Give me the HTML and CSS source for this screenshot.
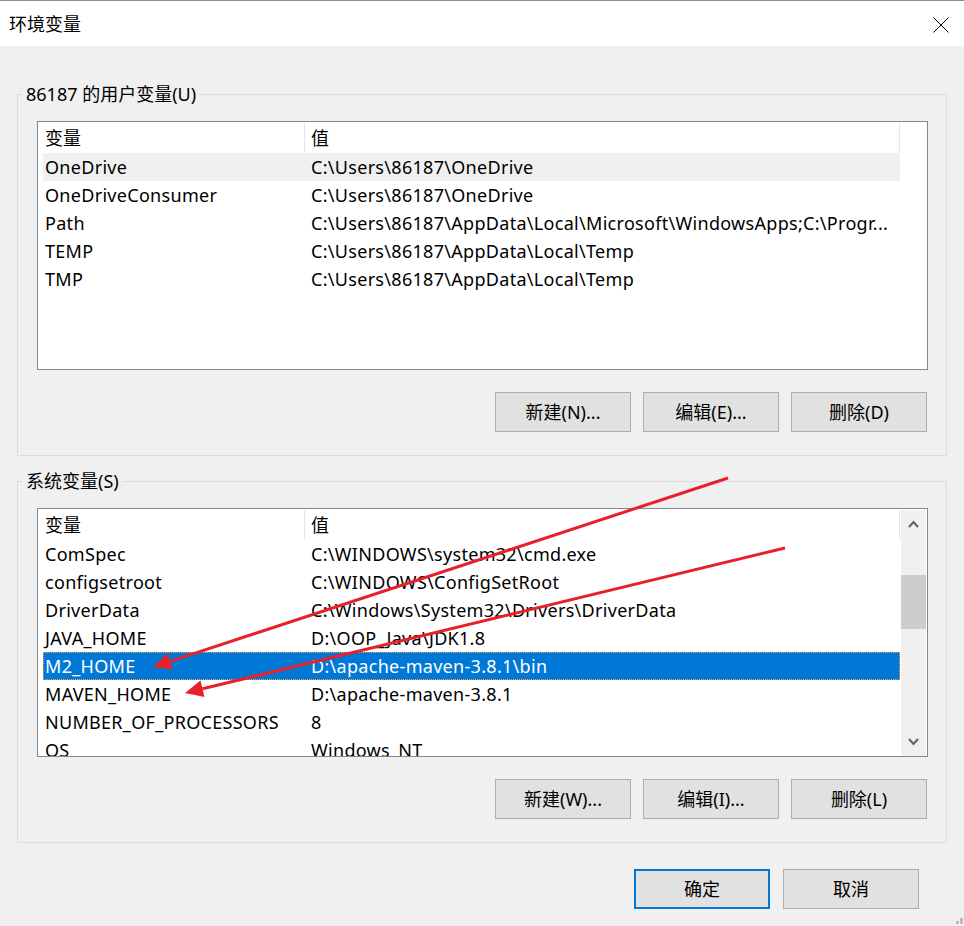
FILE: index.html
```html
<!DOCTYPE html>
<html lang="zh-CN">
<head>
    <meta charset="UTF-8">
    <meta name="viewport" content="width=device-width, initial-scale=1.0">
    <title>环境变量</title>
    <link rel="stylesheet" href="styles.css">
</head>
<body>
    <div class="titlebar">
        <span class="title">环境变量</span>
        <svg class="close" viewBox="0 0 16 16">
            <path d="M0.5 0.5L15.5 15.5M15.5 0.5L0.5 15.5"></path>
        </svg>
    </div>

    <div class="content">
        <div class="group">
            <span class="legend">86187 的用户变量(U)</span>
            <div class="listbox">
                <div class="list-main">
                    <div class="list-head">
                        <div class="head-col name">变量</div>
                        <div class="head-col value">值</div>
                    </div>
                    <div class="list-body">
                        <div class="row hot"><span class="name">OneDrive</span><span class="value">C:\Users\86187\OneDrive</span></div>
                        <div class="row"><span class="name">OneDriveConsumer</span><span class="value">C:\Users\86187\OneDrive</span></div>
                        <div class="row"><span class="name">Path</span><span class="value">C:\Users\86187\AppData\Local\Microsoft\WindowsApps;C:\Progr...</span></div>
                        <div class="row"><span class="name">TEMP</span><span class="value">C:\Users\86187\AppData\Local\Temp</span></div>
                        <div class="row"><span class="name">TMP</span><span class="value">C:\Users\86187\AppData\Local\Temp</span></div>
                    </div>
                </div>
            </div>
            <div class="group-buttons">
                <button class="btn">新建(N)...</button>
                <button class="btn">编辑(E)...</button>
                <button class="btn">删除(D)</button>
            </div>
        </div>

        <div class="group system">
            <span class="legend">系统变量(S)</span>
            <div class="listbox">
                <div class="list-main">
                    <div class="list-head">
                        <div class="head-col name">变量</div>
                        <div class="head-col value">值</div>
                    </div>
                    <div class="list-body">
                        <div class="row"><span class="name">ComSpec</span><span class="value">C:\WINDOWS\system32\cmd.exe</span></div>
                        <div class="row"><span class="name">configsetroot</span><span class="value">C:\WINDOWS\ConfigSetRoot</span></div>
                        <div class="row"><span class="name">DriverData</span><span class="value">C:\Windows\System32\Drivers\DriverData</span></div>
                        <div class="row"><span class="name">JAVA_HOME</span><span class="value">D:\OOP_Java\JDK1.8</span></div>
                        <div class="row selected"><span class="name">M2_HOME</span><span class="value">D:\apache-maven-3.8.1\bin</span></div>
                        <div class="row"><span class="name">MAVEN_HOME</span><span class="value">D:\apache-maven-3.8.1</span></div>
                        <div class="row"><span class="name">NUMBER_OF_PROCESSORS</span><span class="value">8</span></div>
                        <div class="row"><span class="name">OS</span><span class="value">Windows_NT</span></div>
                    </div>
                </div>
                <div class="scrollbar">
                    <div class="sb-btn">
                        <svg viewBox="0 0 11 8"><polyline points="1,7 5.5,2 10,7"></polyline></svg>
                    </div>
                    <div class="sb-track">
                        <div class="sb-thumb"></div>
                    </div>
                    <div class="sb-btn">
                        <svg viewBox="0 0 11 8"><polyline points="1,1 5.5,6 10,1"></polyline></svg>
                    </div>
                </div>
            </div>
            <div class="group-buttons">
                <button class="btn">新建(W)...</button>
                <button class="btn">编辑(I)...</button>
                <button class="btn">删除(L)</button>
            </div>
        </div>

        <div class="dialog-buttons">
            <button class="btn default">确定</button>
            <button class="btn">取消</button>
        </div>
    </div>

    <!-- red annotation arrows drawn over the list -->
    <svg class="marks" viewBox="0 0 964 926">
        <line x1="728" y1="478" x2="170.1" y2="661.4"></line>
        <polygon points="153,667 172.75,669.5 167.45,653.3"></polygon>
        <line x1="785" y1="548" x2="202.5" y2="688.8"></line>
        <polygon points="185,693 204.5,697.1 200.5,680.5"></polygon>
    </svg>

    <svg class="grip" viewBox="0 0 8 7">
        <rect x="4" y="0" width="3" height="3"></rect>
        <rect x="0" y="3" width="3" height="3"></rect>
        <rect x="4" y="3" width="3" height="3"></rect>
    </svg>
</body>
</html>
```

FILE: styles.css
```css
* {
    box-sizing: border-box;
}

body {
    margin: 0;
    width: 964px;
    height: 926px;
    overflow: hidden;
    position: relative;
    background-color: #f0f0f0;
    font-family: "Noto Sans", "Noto Sans CJK SC", sans-serif;
    font-size: 18px;
    color: #000;
}

.titlebar {
    height: 46px;
    background-color: #fff;
    border-top: 1px solid #8c8c8c;
    display: flex;
    align-items: center;
    justify-content: space-between;
    padding: 0 15px 0 9px;
}

.title {
    line-height: 24px;
}

.close {
    width: 16px;
    height: 16px;
    margin-top: 2px;
    fill: none;
    stroke: #000;
    stroke-width: 1;
}

.content {
    padding-top: 48px;
}

/* group boxes */
.group {
    position: relative;
    width: 930px;
    margin-left: 17px;
    border: 1px solid #dcdcdc;
    padding: 26px 18px 23px 19px;
}

.group.system {
    margin-top: 25px;
}

.legend {
    position: absolute;
    top: -13px;
    left: 4px;
    padding: 0 3px 0 4px;
    line-height: 24px;
    background-color: #f0f0f0;
}

/* list views */
.listbox {
    height: 249px;
    border: 1px solid #828790;
    background-color: #fff;
    display: flex;
}

.list-main {
    flex: 0 0 862px;
    overflow: hidden;
}

.list-head {
    display: flex;
    height: 31px;
}

.head-col {
    line-height: 30px;
    border-right: 1px solid #e5e5e5;
    margin-top: 1px;
}

.head-col.name {
    width: 267px;
    padding-left: 7px;
}

.head-col.value {
    width: 595px;
    padding-left: 6px;
}

.list-body {
    height: 216px;
    overflow: hidden;
}

.row {
    display: grid;
    grid-template-columns: 262px 1fr;
    margin-left: 5px;
    height: 28px;
    line-height: 28px;
    white-space: nowrap;
    letter-spacing: 0.3px;
}

.row .name {
    padding-left: 2px;
    overflow: hidden;
}

.row .value {
    padding-left: 6px;
    overflow: hidden;
}

.row.hot {
    background-color: #f0f0f0;
}

.row.selected {
    background-color: #0078d7;
    color: #fff;
    outline: 1px dotted #f2a349;
    outline-offset: -1px;
}

/* scrollbar */
.scrollbar {
    width: 25px;
    margin: 1px 1px 0 1px;
    background-color: #f0f0f0;
    display: flex;
    flex-direction: column;
}

.sb-btn {
    height: 28px;
    display: flex;
    align-items: center;
    justify-content: center;
}

.sb-btn svg {
    width: 11px;
    height: 8px;
    fill: none;
    stroke: #606060;
    stroke-width: 2;
}

.sb-track {
    flex: 1;
}

.sb-thumb {
    margin-top: 37px;
    height: 54px;
    background-color: #cdcdcd;
}

/* buttons */
.group-buttons {
    display: flex;
    justify-content: flex-end;
    gap: 12px;
    margin-top: 22px;
    padding-right: 1px;
}

.btn {
    width: 136px;
    height: 40px;
    padding: 0;
    border: 1px solid #adadad;
    background-color: #e1e1e1;
    font-family: inherit;
    font-size: 18px;
    color: #000;
    line-height: 24px;
}

.btn.default {
    border: 2px solid #0078d7;
}

.dialog-buttons {
    display: flex;
    justify-content: flex-end;
    gap: 13px;
    margin-top: 26px;
    padding-right: 45px;
}

/* overlays */
.marks {
    position: absolute;
    top: 0;
    left: 0;
    width: 964px;
    height: 926px;
    pointer-events: none;
}

.marks line {
    stroke: #e8202a;
    stroke-width: 3;
}

.marks polygon {
    fill: #e8202a;
}

.grip {
    position: absolute;
    right: 0;
    bottom: 1px;
    width: 8px;
    height: 7px;
    fill: #bcbcbc;
}
```
